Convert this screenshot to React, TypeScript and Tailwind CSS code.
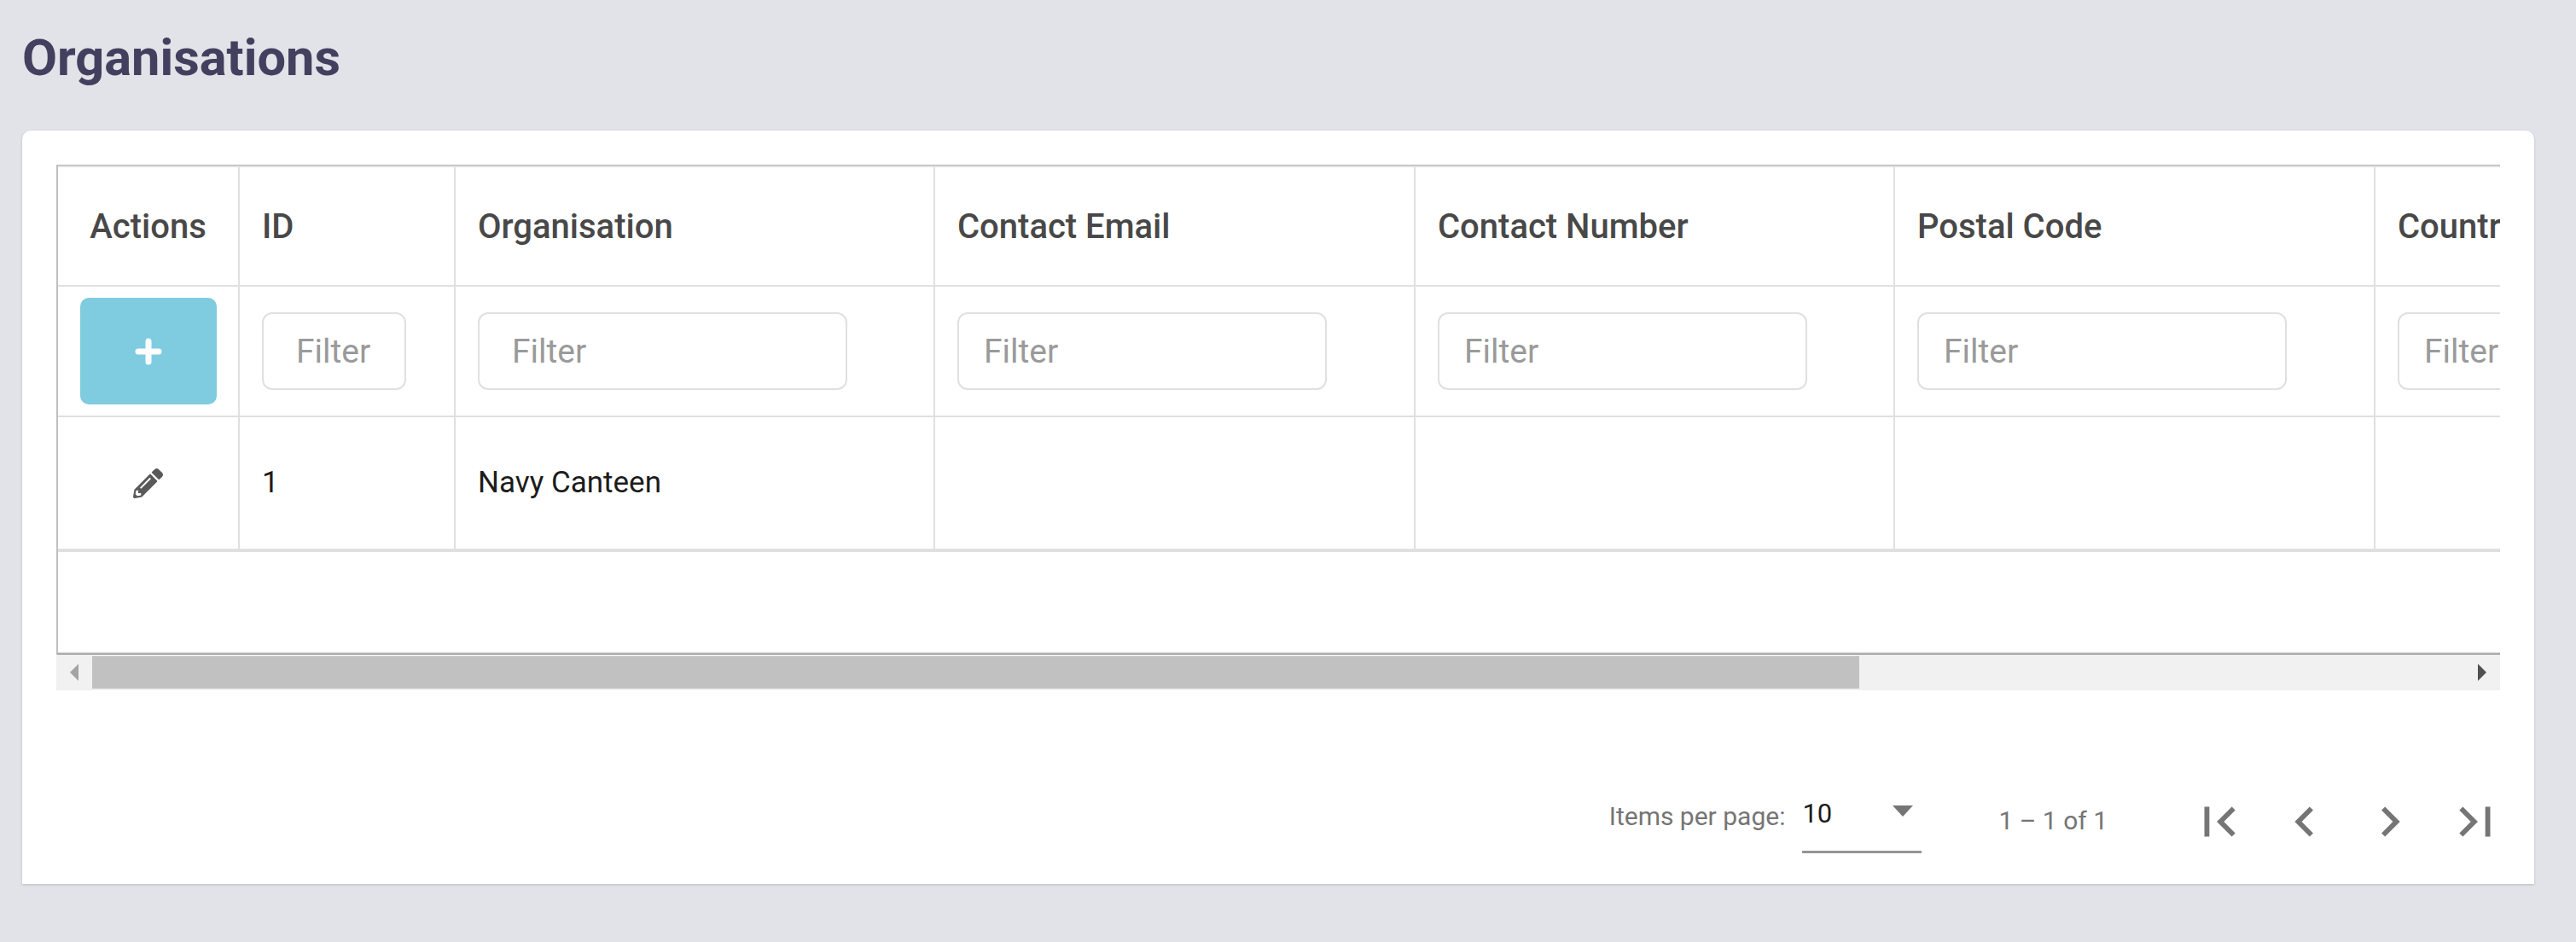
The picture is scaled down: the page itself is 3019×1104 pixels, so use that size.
import { FaPencilAlt } from 'react-icons/fa';

const columns = ['Contact Email', 'Contact Number', 'Postal Code', 'Country'];

function PageIcon({ d }: { d: string }) {
  return (
    <button className="w-[100px] h-[100px] flex items-center justify-center text-[#757575]">
      <svg viewBox="0 0 24 24" className="w-[70px] h-[70px]" fill="currentColor"><path d={d} /></svg>
    </button>
  );
}

function FilterInput({ className = 'w-[433px] pl-[29px]' }: { className?: string }) {
  return (
    <input
      placeholder="Filter"
      readOnly
      className={`h-[91px] border-2 border-[#e0e0e0] rounded-[12px] text-[39px] bg-white outline-none placeholder:text-[#9a9a9a] ${className}`}
    />
  );
}

export default function App() {
  const headCell = 'border-t-2 border-r-2 border-b-2 border-[#e0e0e0] text-left font-medium text-[40px] text-[#484848] pl-[26px] pt-[2px] whitespace-nowrap';
  const filterCell = 'border-r-2 border-b-2 border-[#e0e0e0] pl-[26px] text-left font-normal';
  const bodyCell = 'border-r-2 border-b-4 border-[#e0e0e0] pl-[26px] pt-[1px] text-[35px] text-[#1c1c1c]';

  return (
    <div className="min-h-[1104px] bg-[#e2e3e8] pl-[26px] pr-[49px] font-['Roboto',sans-serif]">
      <h1 className="h-[153px] pt-[34px] text-[59.5px] leading-[68px] font-bold text-[#43405f]">Organisations</h1>
      <div className="h-[883px] bg-white rounded-t-[10px] shadow-[0_1px_3px_rgba(0,0,0,0.18)] pt-[40px] pl-[40px] pr-[40px] flex flex-col">
        <div className="h-[574px] border-t border-l-2 border-b border-t-[#b5b5b5] border-l-[#c0bfc6] border-b-[#666666] overflow-hidden">
          <div className="h-full border-b-2 border-[#e0e0e0] overflow-hidden">
            <table className="table-fixed w-[3278px] border-separate border-spacing-0">
              <colgroup>
                <col className="w-[213px]" />
                <col className="w-[253px]" />
                <col className="w-[562px]" />
                <col className="w-[563px]" />
                <col className="w-[562px]" />
                <col className="w-[563px]" />
                <col className="w-[562px]" />
              </colgroup>
              <thead>
                <tr className="h-[142px]">
                  <th className="border-t-2 border-r-2 border-b-2 border-[#e0e0e0] pt-[2px] text-center font-medium text-[40px] text-[#484848]">Actions</th>
                  <th className={headCell}>ID</th>
                  <th className={headCell}>Organisation</th>
                  {columns.map((c) => (
                    <th key={c} className={headCell}>{c}</th>
                  ))}
                </tr>
                <tr className="h-[153px]">
                  <th className="border-r-2 border-b-2 border-[#e0e0e0]">
                    <div className="flex justify-center">
                      <button className="w-[160px] h-[125px] rounded-[10px] bg-[#7fcbe0] flex items-center justify-center">
                        <svg viewBox="0 0 32 32" className="w-[32px] h-[32px]" stroke="#fff" strokeWidth="7" strokeLinecap="round"><path d="M16 4v24M4 16h24" /></svg>
                      </button>
                    </div>
                  </th>
                  <th className={filterCell}>
                    <FilterInput className="w-[169px] pl-[38px]" />
                  </th>
                  <th className={filterCell}>
                    <FilterInput className="w-[433px] pl-[38px]" />
                  </th>
                  {columns.map((c) => (
                    <th key={c} className={filterCell}>
                      <FilterInput />
                    </th>
                  ))}
                </tr>
              </thead>
              <tbody>
                <tr className="h-[158px]">
                  <td className="border-r-2 border-b-4 border-[#e0e0e0]">
                    <div className="flex justify-center text-[#5a5a5a]"><FaPencilAlt size={35} /></div>
                  </td>
                  <td className={bodyCell}>1</td>
                  <td className={bodyCell}>Navy Canteen</td>
                  {columns.map((c) => (
                    <td key={c} className={bodyCell} />
                  ))}
                </tr>
              </tbody>
            </table>
          </div>
        </div>

        <div className="h-[42px] bg-[#f1f1f1] flex items-center">
          <div className="w-[42px] flex justify-center">
            <div className="w-0 h-0 border-y-[10px] border-y-transparent border-r-[10px] border-r-[#a3a3a3]" />
          </div>
          <div className="w-[2071px] h-[38px] bg-[#c1c1c1]" />
          <div className="flex-1 flex justify-end pr-[16px]">
            <div className="w-0 h-0 border-y-[10px] border-y-transparent border-l-[10px] border-l-[#505050]" />
          </div>
        </div>

        <div className="flex-1 flex items-center justify-end pt-[80px] -mr-[21px] text-[#757575]">
          <span className="text-[30px] mr-[20px] -mt-[12px]">Items per page:</span>
          <div className="w-[140px] h-[68px] border-b-[3px] border-[#949494] flex items-start justify-between pt-[4px] pr-[10px] -mb-[6px]">
            <span className="text-[31px] leading-[36px] text-[#1c1c1c]">10</span>
            <div className="mt-[8px] w-0 h-0 border-x-[12px] border-x-transparent border-t-[13px] border-t-[#757575]" />
          </div>
          <span className="text-[30px] ml-[90px] mr-[81px] -mt-[2px]">1 – 1 of 1</span>
          <PageIcon d="M18.41 16.59L13.82 12l4.59-4.59L17 6l-6 6 6 6zM6 6h2v12H6z" />
          <PageIcon d="M15.41 7.41L14 6l-6 6 6 6 1.41-1.41L10.83 12z" />
          <PageIcon d="M10 6L8.59 7.41 13.17 12l-4.58 4.59L10 18l6-6z" />
          <PageIcon d="M5.59 7.41L10.18 12l-4.59 4.59L7 18l6-6-6-6zM16 6h2v12h-2z" />
        </div>
      </div>
    </div>
  );
}
